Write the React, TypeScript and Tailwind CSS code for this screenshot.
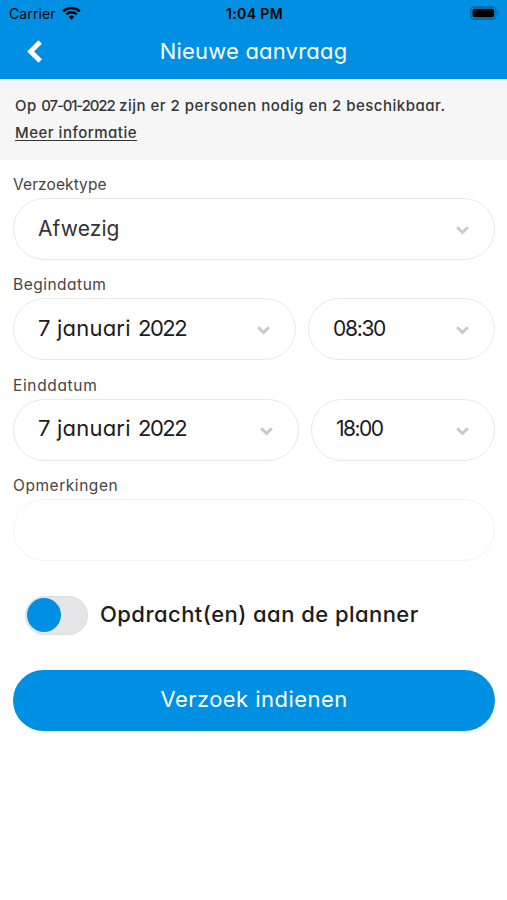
import { useState } from "react";
import type { ReactNode } from "react";
import clsx from "clsx";

function Chevron({ className }: { className?: string }) {
  return (
    <svg
      className={clsx("h-[9px] w-[13px] shrink-0", className)}
      viewBox="0 0 13 9"
      fill="none"
      stroke="#c9c9c9"
      strokeWidth="3"
    >
      <path d="M1.2 1.3 6.5 6.5l5.3-5.2" />
    </svg>
  );
}

function StatusBar() {
  return (
    <div className="grid h-[27px] grid-cols-3 items-center pl-[9px] pr-[7px] text-black">
      <div className="flex items-center gap-[6px]">
        <span className="text-[14px] tracking-[0.1px]">Carrier</span>
        <svg className="-mt-[2px] h-[14px] w-[19px]" viewBox="0 0 19 14" fill="none" stroke="currentColor">
          <path d="M1.2 5.3a11.8 11.8 0 0 1 16.6 0" strokeWidth="2.5" />
          <path d="M4.3 8.4a7.4 7.4 0 0 1 10.4 0" strokeWidth="2.4" />
          <path d="M6.7 10.8a4 4 0 0 1 5.6 0L9.5 13.7z" fill="currentColor" stroke="none" />
        </svg>
      </div>
      <span className="text-center text-[14px] font-semibold tracking-[0.4px]">1:04 PM</span>
      <svg className="-mt-[1px] h-[14px] w-[30px] justify-self-end" viewBox="0 0 31 14">
        <rect x="0.8" y="0.8" width="26" height="12.4" rx="3.6" fill="none" stroke="#03629b" strokeWidth="1.3" />
        <rect x="2.6" y="2.6" width="22.4" height="8.8" rx="1.8" />
        <path d="M28.6 4.8c1.6.7 1.6 3.7 0 4.4z" fill="#03629b" />
      </svg>
    </div>
  );
}

function Label({ children }: { children: ReactNode }) {
  return <div className="flex h-[38.2px] items-end pb-[3px] text-[15.5px] leading-[20px] text-[#454545]">{children}</div>;
}

function Select({ className, children }: { className?: string; children: ReactNode }) {
  return (
    <button
      className={clsx(
        "flex h-[62px] items-center justify-between rounded-full border border-[#e9e9e9] bg-white pl-[24px] pr-[25px] text-left text-[21px] text-[#1c1c1c]",
        className
      )}
    >
      {children}
      <Chevron className="mt-[3px]" />
    </button>
  );
}

function DateValue() {
  return (
    <span className="-mt-[2px] text-[22px] tracking-[0.2px]">
      7 januari <span className="ml-[1px] tracking-[-1.5px]">2022</span>
    </span>
  );
}

export default function App() {
  const [sendToPlanner, setSendToPlanner] = useState(false);

  return (
    <div className="min-h-[900px] bg-white font-['Inter',sans-serif]">
      <header className="h-[79px] bg-[#0090e3]">
        <StatusBar />
        <div className="grid h-[49px] grid-cols-[60px_1fr_60px] items-center">
          <button className="pl-[27px]" aria-label="Terug">
            <svg className="h-[23px] w-[16px]" viewBox="0 0 16 23" fill="none" stroke="#fff" strokeWidth="4.8">
              <path d="M13.2 2 3.6 11.5l9.6 9.5" />
            </svg>
          </button>
          <h1 className="text-center text-[22px] tracking-[0.2px] text-white [font-feature-settings:'cv11']">
            Nieuwe aanvraag
          </h1>
        </div>
      </header>

      <main className="text-[#1c1c1c] [font-feature-settings:'cv11']">
        <section className="h-[81px] bg-[#f6f6f6] px-[15px] pt-[13px] text-[15px] leading-[27px] font-medium tracking-[0.5px] text-[#353535]">
          <p className="whitespace-nowrap">
            Op <span className="tracking-[-1.15px]">07-01-2022</span> zijn er 2 personen nodig en 2 beschikbaar.
          </p>
          <a className="underline underline-offset-2">Meer informatie</a>
        </section>

        <form className="flex flex-col pr-[12px] pl-[13px]" onSubmit={(e) => e.preventDefault()}>
          <Label><span className="tracking-[0.1px]">Verzoektype</span></Label>
          <Select><span className="tracking-[0.1px] text-[#333]">Afwezig</span></Select>

          <Label><span className="tracking-[0.5px]">Begindatum</span></Label>
          <div className="flex gap-[12px]">
            <Select className="w-[283px]"><DateValue /></Select>
            <Select className="flex-1"><span className="-mt-[2px] tracking-[-1.3px]">08:30</span></Select>
          </div>

          <Label><span className="tracking-[0.65px]">Einddatum</span></Label>
          <div className="flex gap-[12px]">
            <Select className="w-[286px]"><DateValue /></Select>
            <Select className="flex-1"><span className="-mt-[2px] tracking-[-1.5px]">18:00</span></Select>
          </div>

          <Label><span className="tracking-[0.55px]">Opmerkingen</span></Label>
          <input className="h-[62px] rounded-full border border-[#f3f3f3] px-[24px] text-[21px] outline-none" />

          <div className="mt-[35px] flex items-center gap-[12px] pl-[12px]">
            <button
              type="button"
              role="switch"
              aria-checked={sendToPlanner}
              onClick={() => setSendToPlanner(!sendToPlanner)}
              className={clsx(
                "flex h-[39px] w-[63px] items-center rounded-full border border-[#dedee0] bg-[#e6e6e8] px-[1px]",
                sendToPlanner && "justify-end"
              )}
            >
              <span className="size-[34px] rounded-full bg-[#0090e3]" />
            </button>
            <span className="-mt-[2px] text-[22px] font-[450] tracking-[0.45px]">Opdracht(en) aan de planner</span>
          </div>

          <button className="mt-[35px] h-[61px] rounded-full bg-[#0090e3] pb-[2px] text-[22px] tracking-[0.45px] text-white">
            Verzoek indienen
          </button>
        </form>
      </main>
    </div>
  );
}
